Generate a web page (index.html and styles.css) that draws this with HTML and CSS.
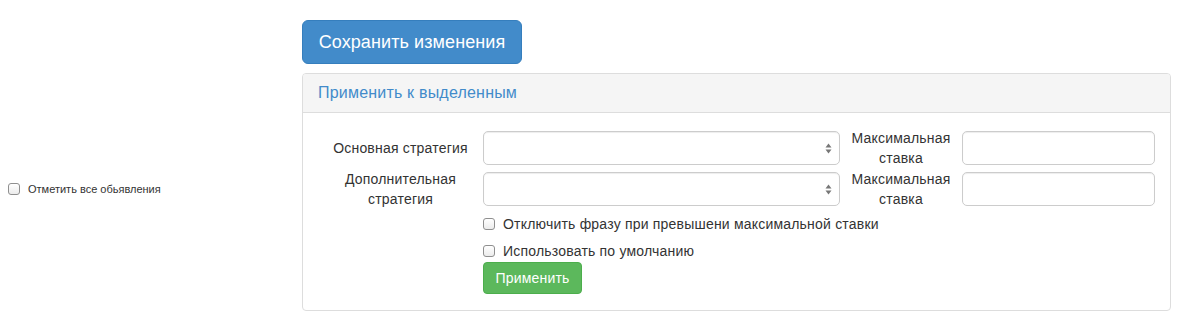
FILE: index.html
```html
<!DOCTYPE html>
<html>
	<head>
		<meta charset="utf-8" />
		<title>Стратегии</title>
		<link rel="stylesheet" href="styles.css">
	</head>
	<body>
		<div class="page">
			<div class="save-cell">
				<button class="btn btn-lg btn-primary">Сохранить изменения</button>
			</div>
			<div class="check-all">
				<label><input type="checkbox"> Отметить все обьявления</label>
			</div>
			<div class="panel">
				<div class="panel-heading">Применить к выделенным</div>
				<div class="panel-body">
					<div class="form-row">
						<label class="lbl">Основная стратегия</label>
						<div class="select-wrap">
							<select class="form-control"></select>
							<svg class="arrows" width="7" height="11" viewBox="0 0 7 11"><path d="M3.5 0.5 L6.5 4.5 L0.5 4.5 Z M0.5 6.5 L6.5 6.5 L3.5 10.5 Z" fill="#777"/></svg>
						</div>
						<label class="lbl">Максимальная ставка</label>
						<input type="text" class="form-control">
					</div>
					<div class="form-row">
						<label class="lbl">Дополнительная стратегия</label>
						<div class="select-wrap">
							<select class="form-control"></select>
							<svg class="arrows" width="7" height="11" viewBox="0 0 7 11"><path d="M3.5 0.5 L6.5 4.5 L0.5 4.5 Z M0.5 6.5 L6.5 6.5 L3.5 10.5 Z" fill="#777"/></svg>
						</div>
						<label class="lbl">Максимальная ставка</label>
						<input type="text" class="form-control">
					</div>
					<div class="options">
						<label class="checkbox first"><input type="checkbox"> Отключить фразу при превышени максимальной ставки</label>
						<label class="checkbox"><input type="checkbox"> Использовать по умолчанию</label>
						<button class="btn btn-success">Применить</button>
					</div>
				</div>
			</div>
		</div>
	</body>
</html>
```

FILE: styles.css
```css
*{
	margin: 0;
	padding: 0;
	box-sizing: border-box;
}
body{
	font-family: "Helvetica Neue", "Liberation Sans", Arial, sans-serif;
	font-size: 14px;
	line-height: 20px;
	letter-spacing: 0.2px;
	color: #333;
	background: #fff;
}
.page{
	display: grid;
	grid-template-columns: 302px 869px;
	grid-template-rows: auto auto;
}
.save-cell{
	grid-column: 2;
	grid-row: 1;
	padding-top: 20px;
}
.btn{
	display: inline-block;
	font-family: inherit;
	letter-spacing: inherit;
	white-space: nowrap;
	color: #fff;
	border: 1px solid transparent;
	cursor: pointer;
	text-align: center;
}
.btn-lg{
	width: 220px;
	height: 44px;
	font-size: 18px;
	line-height: 24px;
	letter-spacing: 0.1px;
	padding: 9px 0;
	border-radius: 6px;
}
.btn-primary{
	background-color: #428bca;
	border-color: #357ebd;
}
.btn-success{
	width: 99px;
	height: 32px;
	font-size: 14px;
	line-height: 20px;
	padding: 5px 0;
	border-radius: 4px;
	background-color: #5cb85c;
	border-color: #4cae4c;
	margin-top: 1px;
}
.check-all{
	grid-column: 1;
	grid-row: 2;
	align-self: center;
	padding: 0 0 0 8px;
	margin-top: 3px;
	font-size: 11px;
	line-height: 14px;
	letter-spacing: 0;
	color: #333;
}
.check-all label{
	display: flex;
	align-items: center;
	gap: 8px;
}
input[type=checkbox]{
	appearance: none;
	-webkit-appearance: none;
	width: 12px;
	height: 12px;
	border: 1px solid #8f8f8f;
	border-radius: 3px;
	background: linear-gradient(#fff, #ececec);
	flex: none;
}
.panel{
	grid-column: 2;
	grid-row: 2;
	margin-top: 9px;
	border: 1px solid #ddd;
	border-radius: 4px;
	background: #fff;
}
.panel-heading{
	background-color: #f5f5f5;
	border-bottom: 1px solid #ddd;
	border-radius: 3px 3px 0 0;
	padding: 10px 15px 10px 15px;
	font-size: 16px;
	line-height: 18px;
	color: #428bca;
}
.panel-body{
	padding: 15px 15px 16px 15px;
}
.form-row{
	display: grid;
	grid-template-columns: 165px 357px 122px 193px;
	align-items: center;
	min-height: 40px;
	margin-bottom: 1px;
}
.lbl{
	text-align: center;
	padding: 0 4px;
}
.form-control{
	display: block;
	width: 100%;
	height: 34px;
	border: 1px solid #ccc;
	border-radius: 5px;
	background: #fff;
	font-family: inherit;
	font-size: 14px;
	box-shadow: inset 0 1px 1px rgba(0,0,0,0.075);
}
select.form-control{
	appearance: none;
	-webkit-appearance: none;
}
.select-wrap{
	position: relative;
}
.arrows{
	position: absolute;
	right: 8px;
	top: 12px;
}
.options{
	margin-left: 165px;
}
.checkbox{
	display: flex;
	align-items: center;
	gap: 8px;
	margin-top: 7px;
}
.checkbox.first{
	margin-top: 5px;
}
```
